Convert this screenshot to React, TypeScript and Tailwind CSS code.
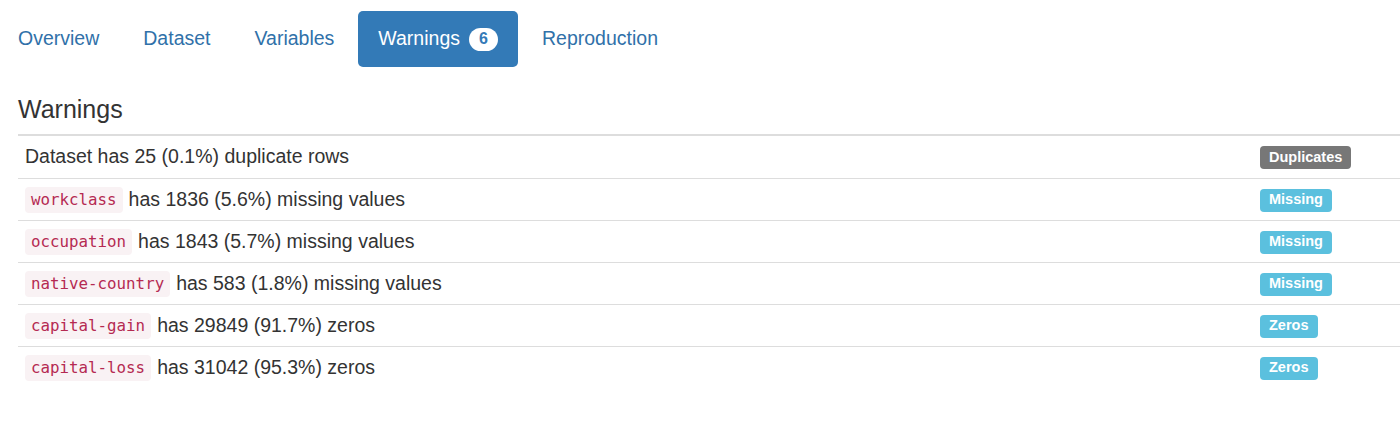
import React from 'react';

const tabs = ['Overview', 'Dataset', 'Variables', 'Warnings', 'Reproduction'];

type Warning = {
    column?: string;
    text: string;
    label: string;
    kind: 'gray' | 'info';
};

const warnings: Warning[] = [
    { text: 'Dataset has 25 (0.1%) duplicate rows', label: 'Duplicates', kind: 'gray' },
    { column: 'workclass', text: 'has 1836 (5.6%) missing values', label: 'Missing', kind: 'info' },
    { column: 'occupation', text: 'has 1843 (5.7%) missing values', label: 'Missing', kind: 'info' },
    { column: 'native-country', text: 'has 583 (1.8%) missing values', label: 'Missing', kind: 'info' },
    { column: 'capital-gain', text: 'has 29849 (91.7%) zeros', label: 'Zeros', kind: 'info' },
    { column: 'capital-loss', text: 'has 31042 (95.3%) zeros', label: 'Zeros', kind: 'info' },
];

export default function App() {
    return (
        <div className="w-[1400px] h-[426px] bg-white overflow-hidden text-[#333] font-['Liberation_Sans',Arial,sans-serif]">
            {/* Tabs */}
            <nav className="flex items-center gap-[4px] pt-[11px] ml-[-2px]">
                {tabs.map((tab) =>
                    tab === 'Warnings' ? (
                        <div
                            key={tab}
                            className="h-[56px] px-[20px] flex items-center gap-[9px] rounded-[5px] bg-[#337ab7] text-white text-[19.5px]"
                        >
                            {tab}
                            <span className="h-[23px] w-[29px] flex items-center justify-center rounded-full bg-white text-[#337ab7] text-[16px] font-bold">
                                6
                            </span>
                        </div>
                    ) : (
                        <a key={tab} className="h-[56px] px-[20px] flex items-center text-[#3071a9] text-[19.5px]">
                            {tab}
                        </a>
                    )
                )}
            </nav>

            <div className="pl-[18px]">
                <h4 className="text-[25px] leading-none mt-[30px] mb-[12px]">Warnings</h4>

                <div className="border-t-2 border-[#ddd]">
                    {warnings.map((w, i) => (
                        <div key={i} className={`flex items-center h-[42px] pl-[7px] ${i > 0 ? 'border-t border-[#ddd]' : ''}`}>
                            <div className="flex-1 flex items-center text-[19.5px]">
                                {w.column && (
                                    <code className="mr-[6px] px-[6px] h-[26px] flex items-center rounded-[4px] bg-[#f9f2f4] text-[#b52a52] text-[15.8px] font-['DejaVu_Sans_Mono',monospace]">
                                        {w.column}
                                    </code>
                                )}
                                <span>{w.text}</span>
                            </div>
                            <div className="w-[140px] shrink-0">
                                <span
                                    className={`inline-flex items-center h-[23px] px-[9px] rounded-[4px] text-white text-[14.5px] font-bold ${
                                        w.kind === 'gray' ? 'bg-[#777]' : 'bg-[#5bc0de]'
                                    }`}
                                >
                                    {w.label}
                                </span>
                            </div>
                        </div>
                    ))}
                </div>
            </div>
        </div>
    );
}
